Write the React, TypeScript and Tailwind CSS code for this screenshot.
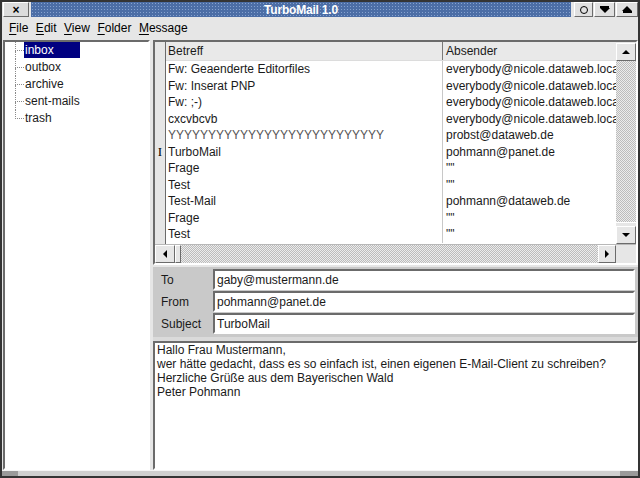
import React from "react";

// Motif-ish bevels
const sunken = "border-2 border-t-[#6b6b6b] border-l-[#6b6b6b] border-b-white border-r-white";
const raised = "border border-t-white border-l-white border-b-[#6b6b6b] border-r-[#6b6b6b]";
const checker =
  "[background-image:repeating-conic-gradient(#bcbcbc_0%_25%,#ececec_0%_50%)] [background-size:2px_2px]";

const mails: [string, string][] = [
  ["Fw: Geaenderte Editorfiles", "everybody@nicole.dataweb.local"],
  ["Fw: Inserat PNP", "everybody@nicole.dataweb.local"],
  ["Fw: ;-)", "everybody@nicole.dataweb.local"],
  ["cxcvbcvb", "everybody@nicole.dataweb.local"],
  ["YYYYYYYYYYYYYYYYYYYYYYYYYYY", "probst@dataweb.de"],
  ["TurboMail", "pohmann@panet.de"],
  ["Frage", '""'],
  ["Test", '""'],
  ["Test-Mail", "pohmann@dataweb.de"],
  ["Frage", '""'],
  ["Test", '""'],
];

const folders = ["inbox", "outbox", "archive", "sent-mails", "trash"];

function TitleBar() {
  return (
    <div className="flex h-[15px] gap-[2px] pl-[1px] bg-[#e6e6e6]">
      <div className={`w-[26px] flex items-center justify-center bg-[#dcdcdc] ${raised} text-[12px] font-bold leading-none`}>
        ×
      </div>
      <div className="flex-1 flex items-center justify-center bg-[#4c6ea6] [background-image:radial-gradient(#86a2cf_0.8px,transparent_0.9px)] [background-size:3px_3px]">
        <span className="text-white font-bold text-[12px] leading-none tracking-[-0.2px]">TurboMail 1.0</span>
      </div>
      <div className="flex gap-[1px] pl-[1px]">
        <div className={`w-[19px] flex items-center justify-center bg-[#e0e0e0] ${raised}`}>
          <div className="w-[8px] h-[8px] rounded-full border border-black" />
        </div>
        <div className={`w-[21px] flex flex-col items-center justify-center bg-[#e0e0e0] ${raised}`}>
          <div className="w-[9px] h-[2px] bg-black" />
          <div className="w-0 h-0 border-l-[5px] border-r-[5px] border-t-[5px] border-l-transparent border-r-transparent border-t-black" />
        </div>
        <div className={`w-[22px] flex flex-col items-center justify-center bg-[#e0e0e0] ${raised}`}>
          <div className="w-0 h-0 border-l-[5px] border-r-[5px] border-b-[5px] border-l-transparent border-r-transparent border-b-black" />
          <div className="w-[9px] h-[2px] bg-black" />
        </div>
      </div>
    </div>
  );
}

function MenuBar() {
  const items = ["File", "Edit", "View", "Folder", "Message"];
  return (
    <div className="flex h-[21px] items-center gap-[7.5px] pl-[7px] pt-[1px] text-[12px] text-black">
      {items.map((m) => (
        <span key={m}>
          <span className="underline underline-offset-2">{m[0]}</span>
          {m.slice(1)}
        </span>
      ))}
    </div>
  );
}

function FolderTree() {
  return (
    <div className={`w-[147px] shrink-0 bg-white ${sunken} flex flex-col`}>
      {folders.map((f, i) => {
        const last = i === folders.length - 1;
        return (
          <div key={f} className="flex h-[17px]">
            <div className="w-[10px] shrink-0" />
            <div className="w-[9px] shrink-0 flex flex-col">
              <div className="h-1/2 border-l border-b border-dotted border-[#8a8a8a]" />
              <div className={`h-1/2 ${last ? "" : "border-l border-dotted border-[#8a8a8a]"}`} />
            </div>
            <div
              className={`h-[16px] flex items-center pl-[1px] text-[12px] ${
                i === 0 ? "w-[56px] bg-[#000080] text-white" : "text-[#1a1a1a]"
              }`}
            >
              {f}
            </div>
          </div>
        );
      })}
    </div>
  );
}

function MailTable() {
  return (
    <div className={`h-[225px] ${sunken} flex flex-col bg-[#e6e6e6]`}>
      <div className="flex flex-1 min-h-0">
        <div className="w-[11px] shrink-0 bg-[#e6e6e6] border-r border-[#6b6b6b] flex flex-col">
          <div className="h-[19px]" />
          {mails.map((m, i) => (
            <div key={i} className="h-[16.5px] flex items-center justify-center">
              {i === 5 ? (
                <span className="font-['Liberation_Serif',serif] text-[13px] leading-none text-black">I</span>
              ) : null}
            </div>
          ))}
        </div>
        <div className="flex-1 min-w-0 bg-white overflow-hidden text-[12px] text-[#1a1a1a]">
          <div className="h-[19px] flex bg-[#e9e9e9] border-b border-[#dcdcdc]">
            <div className="w-[277px] shrink-0 pl-[2px] flex items-center border-r border-[#7a7a7a]">Betreff</div>
            <div className="flex-1 pl-[3px] flex items-center">Absender</div>
          </div>
          {mails.map(([subj, from], i) => (
            <div key={i} className="h-[16.5px] flex">
              <div className={`w-[277px] shrink-0 pl-[2px] flex items-center border-r border-[#c8c8c8] whitespace-nowrap ${i === 4 ? "text-[#555]" : ""}`}>
                {subj}
              </div>
              <div className="flex-1 min-w-0 pl-[3px] flex items-center whitespace-nowrap overflow-hidden">{from}</div>
            </div>
          ))}
        </div>
        <div className="w-[20px] shrink-0 flex flex-col">
          <div className={`h-[18px] mt-[1px] flex items-center justify-center bg-[#e6e6e6] ${raised}`}>
            <div className="w-0 h-0 border-l-[4px] border-r-[4px] border-b-[4px] border-l-transparent border-r-transparent border-b-black" />
          </div>
          <div className={`flex-1 ${checker}`} />
          <div className="h-[4px] bg-[#e6e6e6] border-t border-white" />
          <div className={`h-[18px] flex items-center justify-center bg-[#e6e6e6] ${raised}`}>
            <div className="w-0 h-0 border-l-[4px] border-r-[4px] border-t-[4px] border-l-transparent border-r-transparent border-t-black" />
          </div>
        </div>
      </div>
      <div className="h-[19px] flex border-t border-[#b8b8b8]">
        <div className={`w-[20px] flex items-center justify-center bg-[#e6e6e6] ${raised}`}>
          <div className="w-0 h-0 border-t-[4px] border-b-[4px] border-r-[4px] border-t-transparent border-b-transparent border-r-black" />
        </div>
        <div className={`w-[6px] bg-[#e6e6e6] ${raised}`} />
        <div className={`flex-1 ${checker}`} />
        <div className={`w-[18px] flex items-center justify-center bg-[#e6e6e6] ${raised}`}>
          <div className="w-0 h-0 border-t-[4px] border-b-[4px] border-l-[4px] border-t-transparent border-b-transparent border-l-black" />
        </div>
        <div className="w-[20px] bg-[#e6e6e6]" />
      </div>
    </div>
  );
}

function HeaderForm() {
  const rows = [
    ["To", "gaby@mustermann.de"],
    ["From", "pohmann@panet.de"],
    ["Subject", "TurboMail"],
  ];
  return (
    <div className="h-[70px] bg-[#c9c9c9] flex flex-col gap-[1px] pt-[2px] text-[12px] text-[#1a1a1a]">
      {rows.map(([label, value]) => (
        <div key={label} className="flex h-[21px] items-center">
          <div className="w-[60px] pl-[8px]">{label}</div>
          <div className={`flex-1 h-full mr-[3px] bg-white ${sunken} flex items-center pl-[2px]`}>{value}</div>
        </div>
      ))}
    </div>
  );
}

function MessageBody() {
  return (
    <div className={`flex-1 bg-white ${sunken} px-[2px] text-[12px] leading-[14px] text-[#1a1a1a]`}>
      <div>Hallo Frau Mustermann,</div>
      <div>wer hätte gedacht, dass es so einfach ist, einen eigenen E-Mail-Client zu schreiben?</div>
      <div>Herzliche Grüße aus dem Bayerischen Wald</div>
      <div>Peter Pohmann</div>
    </div>
  );
}

export default function App() {
  return (
    <div className="w-[640px] h-[478px] border-2 border-[#343434] bg-[#e6e6e6] flex flex-col font-['Liberation_Sans',Arial,sans-serif] overflow-hidden">
      <TitleBar />
      <MenuBar />
      <div className="flex-1 min-h-0 flex gap-[3px] pl-[1px] pt-[2px]">
        <FolderTree />
        <div className="flex-1 min-w-0 flex flex-col">
          <MailTable />
          <div className="h-[2px]" />
          <HeaderForm />
          <div className="h-[4px] bg-[#dadada]" />
          <MessageBody />
        </div>
      </div>
      <div className="h-[6px] flex border-t border-[#f4f4f4]">
        <div className="w-[16px] bg-[#9a9a9a]" />
        <div className="flex-1 bg-[#cfcfcf]" />
        <div className="w-[18px] bg-[#9a9a9a]" />
      </div>
    </div>
  );
}
